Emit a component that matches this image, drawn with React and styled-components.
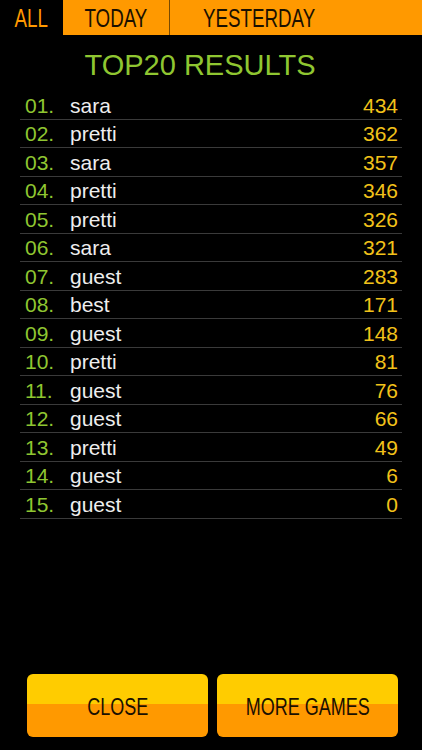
import React from "react";
import styled, { createGlobalStyle } from "styled-components";

const GlobalStyle = createGlobalStyle`
  html, body {
    margin: 0;
    padding: 0;
    background: #000;
    font-family: "Liberation Sans", Arial, sans-serif;
  }
`;

const Page = styled.div`
  width: 422px;
  height: 750px;
  background: #000;
  display: flex;
  flex-direction: column;
  overflow: hidden;
`;

const Tabs = styled.div`
  display: flex;
  height: 35px;
`;

const Tab = styled.div`
  width: ${(p) => (p.grow ? "auto" : p.w + "px")};
  flex: ${(p) => (p.grow ? 1 : "none")};
  display: flex;
  align-items: center;
  justify-content: ${(p) => (p.grow ? "flex-start" : "center")};
  padding-left: ${(p) => (p.grow ? "33px" : "0")};
  padding-top: 2px;
  background: ${(p) => (p.active ? "#000" : "#ff9900")};
  color: ${(p) => (p.active ? "#ff9900" : "#1a1000")};
  border-left: ${(p) => (p.divider ? "1px solid #7a4a00" : "none")};
  font-size: 25px;
  box-sizing: border-box;
`;

const Narrow = styled.span`
  display: inline-block;
  transform: scaleX(0.75);
  transform-origin: ${(p) => p.origin || "center"};
  white-space: nowrap;
`;

const Title = styled.h1`
  margin: 0;
  height: 56px;
  display: flex;
  align-items: center;
  justify-content: center;
  padding: 4px 22px 0 0;
  box-sizing: border-box;
  color: #8fc631;
  font-weight: normal;
  font-size: 29px;
`;

const List = styled.div`
  margin: 0 20px;
`;

const Row = styled.div`
  height: 28.5px;
  display: flex;
  align-items: center;
  border-bottom: 1.5px solid #3a3a3a;
  box-sizing: border-box;
  font-size: 21px;
  padding-top: 2px;
`;

const Rank = styled.span`
  width: 50px;
  padding-left: 5px;
  box-sizing: border-box;
  color: #8fc631;
`;

const Name = styled.span`
  flex: 1;
  color: #eeeeee;
`;

const Score = styled.span`
  padding-right: 4px;
  color: #f2c21a;
`;

const Buttons = styled.div`
  margin-top: auto;
  display: flex;
  gap: 9px;
  padding: 0 24px 13px 27px;
`;

const Button = styled.button`
  flex: 1;
  height: 63px;
  border: none;
  border-radius: 6px;
  background: linear-gradient(#ffcc00 0, #ffcc00 48%, #ff9900 48%, #ff9900 100%);
  color: #1a1000;
  font-family: inherit;
  font-size: 24px;
  display: flex;
  align-items: center;
  justify-content: center;
  padding: 3px 0 0;
  cursor: pointer;
`;

const results = [
  ["01.", "sara", 434],
  ["02.", "pretti", 362],
  ["03.", "sara", 357],
  ["04.", "pretti", 346],
  ["05.", "pretti", 326],
  ["06.", "sara", 321],
  ["07.", "guest", 283],
  ["08.", "best", 171],
  ["09.", "guest", 148],
  ["10.", "pretti", 81],
  ["11.", "guest", 76],
  ["12.", "guest", 66],
  ["13.", "pretti", 49],
  ["14.", "guest", 6],
  ["15.", "guest", 0],
];

export default function App() {
  return (
    <Page>
      <GlobalStyle />
      <Tabs>
        <Tab w={63} active>
          <Narrow>ALL</Narrow>
        </Tab>
        <Tab w={106}>
          <Narrow>TODAY</Narrow>
        </Tab>
        <Tab grow divider>
          <Narrow origin="left">YESTERDAY</Narrow>
        </Tab>
      </Tabs>
      <Title>TOP20 RESULTS</Title>
      <List>
        {results.map(([rank, name, score]) => (
          <Row key={rank}>
            <Rank>{rank}</Rank>
            <Name>{name}</Name>
            <Score>{score}</Score>
          </Row>
        ))}
      </List>
      <Buttons>
        <Button>
          <Narrow>CLOSE</Narrow>
        </Button>
        <Button>
          <Narrow>MORE GAMES</Narrow>
        </Button>
      </Buttons>
    </Page>
  );
}
